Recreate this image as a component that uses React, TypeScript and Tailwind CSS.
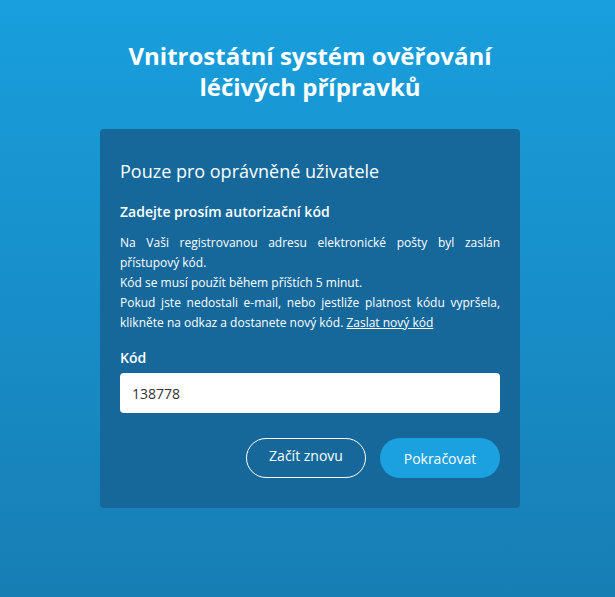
import React from "react";

export default function App() {
  return (
    <div
      className="w-[615px] h-[597px] pl-[5px] bg-gradient-to-b from-[#189fdd] to-[#177eb4] flex flex-col items-center text-white"
      style={{ fontFamily: '"Open Sans", "Noto Sans", sans-serif' }}
    >
      <h1 className="mt-[40px] text-[24px] leading-[31px] font-bold text-center w-[420px]">
        Vnitrostátní systém ověřování
        <br />
        léčivých přípravků
      </h1>
      <div className="mt-[27px] w-[420px] h-[379px] bg-[#16689a] rounded-[4px] px-[20px] pt-[30px]">
        <h2 className="text-[18px] leading-[24px] font-normal">Pouze pro oprávněné uživatele</h2>
        <h3 className="mt-[19px] text-[14px] leading-[20px] font-semibold">Zadejte prosím autorizační kód</h3>
        <p className="mt-[11px] text-[12px] leading-[20px] text-justify">
          Na Vaši registrovanou adresu elektronické pošty byl zaslán přístupový kód.
          <br />
          Kód se musí použít během příštích 5 minut.
          <br />
          Pokud jste nedostali e-mail, nebo jestliže platnost kódu vypršela, klikněte na odkaz a dostanete nový kód.{" "}
          <span className="underline">Zaslat nový kód</span>
        </p>
        <label className="block mt-[15px] text-[14px] leading-[20px] font-semibold">Kód</label>
        <div className="mt-[5px] h-[40px] bg-white rounded-[4px] flex items-center px-[12px] text-[14px] text-[#333]">
          138778
        </div>
        <div className="mt-[25px] flex justify-end gap-[14px]">
          <button className="w-[120px] h-[40px] rounded-full border border-white text-[14px] pb-[6px]">
            Začít znovu
          </button>
          <button className="w-[120px] h-[40px] rounded-full bg-[#1ba0e0] text-[14px]">Pokračovat</button>
        </div>
      </div>
    </div>
  );
}
